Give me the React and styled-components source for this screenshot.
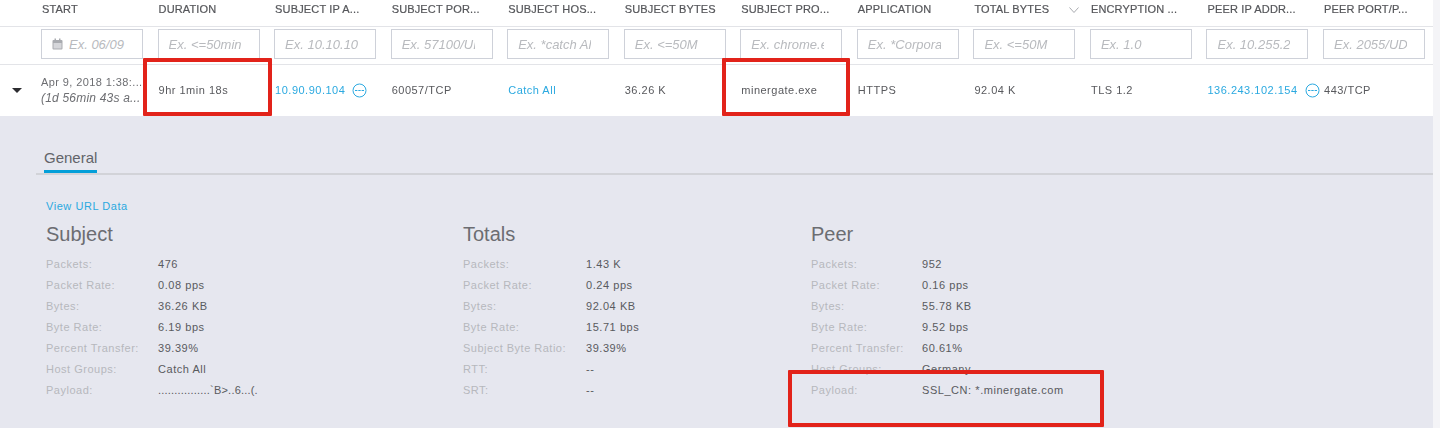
import React from 'react';
import styled, {createGlobalStyle} from "styled-components";

const GlobalStyle = createGlobalStyle`
    html, body {
        margin: 0;
        padding: 0;
        background: #ffffff;
    }
    body {
        font-family: "Liberation Sans", Arial, sans-serif;
        color: #4d4d4f;
    }
`;

const Page = styled.div`
    position: relative;
    width: 1440px;
    height: 428px;
    overflow: hidden;
    filter: blur(0.5px);
`;

const Table = styled.div`
    width: 1433px;
    height: 428px;
    display: flex;
    flex-direction: column;
`;

const Row = styled.div`
    display: grid;
    grid-template-columns: repeat(12, 116.55px);
    padding-left: 41px;
    box-sizing: border-box;
    align-items: center;
`;

const HeaderRow = styled(Row)`
    height: 27px;
    padding-bottom: 9px;
    border-bottom: 1px solid #e3e4e8;
`;

const HeaderCell = styled.div`
    position: relative;
    padding-left: 1px;
    font-size: 11px;
    letter-spacing: 0.15px;
    color: #55565a;
    -webkit-text-stroke: 0.2px #55565a;
    white-space: nowrap;
`;

const SortIcon = styled.svg`
    position: absolute;
    top: 4px;
    left: 96px;
    width: 10px;
    height: 6px;
`;

const FilterRow = styled(Row)`
    height: 38px;
    padding-bottom: 3px;
    border-bottom: 1px solid #e3e4e8;
`;

const FilterBox = styled.div`
    width: 102px;
    height: 30px;
    box-sizing: border-box;
    border: 1px solid #ced1d9;
    padding: 0 17px 0 10px;
    display: flex;
    align-items: center;
    gap: 6px;
    background: #ffffff;
`;

const FilterHint = styled.span`
    flex: 1;
    min-width: 0;
    overflow: hidden;
    font-size: 13px;
    font-style: italic;
    color: #b8babe;
    white-space: nowrap;
`;

const DataRow = styled(Row)`
    position: relative;
    height: 51px;
    padding-bottom: 1px;
`;

const Caret = styled.div`
    position: absolute;
    left: 12px;
    top: 23px;
    width: 0;
    height: 0;
    border-left: 5.5px solid transparent;
    border-right: 5.5px solid transparent;
    border-top: 5px solid #2c2c30;
`;

const DataCell = styled.div`
    display: flex;
    align-items: center;
    gap: 7px;
    padding-left: 1px;
    font-size: 11px;
    letter-spacing: 0.5px;
    color: ${props => props.$link ? "#2ba9e0" : "#58595d"};
    white-space: nowrap;
`;

const StartCell = styled.div`
    font-size: 11px;
    line-height: 16px;
    letter-spacing: 0.4px;
    color: #6d6e72;
    white-space: nowrap;
`;

const StartAgo = styled.div`
    font-style: italic;
    font-size: 12px;
    letter-spacing: 0.2px;
`;

const Panel = styled.div`
    flex: 1;
    background: #e6e7ef;
    padding-top: 33px;
`;

const TabBar = styled.div`
    margin-left: 36px;
    height: 24px;
    padding-left: 8px;
    border-bottom: 2px solid #d2d3d8;
`;

const Tab = styled.div`
    display: inline-block;
    height: 21px;
    border-bottom: 3px solid #049fd9;
    font-size: 15px;
    line-height: 18px;
    color: #626469;
`;

const ViewLink = styled.div`
    margin: 24px 0 0 46px;
    font-size: 11px;
    line-height: 14px;
    letter-spacing: 0.55px;
    color: #2ba9e0;
`;

const Sections = styled.div`
    display: flex;
    margin: 8px 0 0 46px;
`;

const Section = styled.section`
    width: ${props => props.$width}px;
`;

const SectionTitle = styled.h3`
    margin: 0 0 6px;
    font-size: 20px;
    font-weight: 400;
    line-height: 26px;
    color: #6c6d72;
`;

const Stat = styled.div`
    display: grid;
    grid-template-columns: ${props => props.$labelWidth}px 1fr;
    height: 21px;
    align-items: center;
    font-size: 11px;
    white-space: nowrap;
`;

const StatLabel = styled.span`
    letter-spacing: 0.5px;
    color: #b6b8bd;
`;

const StatValue = styled.span`
    letter-spacing: ${props => props.$tight ? "0.2px" : "0.55px"};
    color: #595a5e;
`;

const Highlight = styled.div`
    position: absolute;
    left: ${props => props.$left}px;
    top: ${props => props.$top}px;
    width: ${props => props.$width}px;
    height: ${props => props.$height}px;
    box-sizing: border-box;
    border: 4px solid #e2231a;
    border-radius: 1px;
`;

const ScrollStrip = styled.div`
    position: absolute;
    top: 0;
    right: 0;
    width: 7px;
    height: 428px;
    background: #f4f4f7;
`;

const headers = [
    "START", "DURATION", "SUBJECT IP A...", "SUBJECT POR...", "SUBJECT HOS...", "SUBJECT BYTES",
    "SUBJECT PRO...", "APPLICATION", "TOTAL BYTES", "ENCRYPTION ...", "PEER IP ADDR...", "PEER PORT/P...",
];

const filters = [
    "Ex. 06/09", "Ex. <=50min", "Ex. 10.10.10", "Ex. 57100/UDP", "Ex. *catch All", "Ex. <=50M",
    "Ex. chrome.exe", "Ex. *Corporate", "Ex. <=50M", "Ex. 1.0", "Ex. 10.255.2", "Ex. 2055/UDP",
];

const sections = [
    {
        title: "Subject", width: 417, labelWidth: 112,
        stats: [
            ["Packets:", "476"], ["Packet Rate:", "0.08 pps"], ["Bytes:", "36.26 KB"], ["Byte Rate:", "6.19 bps"],
            ["Percent Transfer:", "39.39%"], ["Host Groups:", "Catch All"], ["Payload:", "................`B>..6...(.", true],
        ],
    },
    {
        title: "Totals", width: 348, labelWidth: 123,
        stats: [
            ["Packets:", "1.43 K"], ["Packet Rate:", "0.24 pps"], ["Bytes:", "92.04 KB"], ["Byte Rate:", "15.71 bps"],
            ["Subject Byte Ratio:", "39.39%"], ["RTT:", "--"], ["SRT:", "--"],
        ],
    },
    {
        title: "Peer", width: 400, labelWidth: 111,
        stats: [
            ["Packets:", "952"], ["Packet Rate:", "0.16 pps"], ["Bytes:", "55.78 KB"], ["Byte Rate:", "9.52 bps"],
            ["Percent Transfer:", "60.61%"], ["Host Groups:", "Germany"], ["Payload:", "SSL_CN: *.minergate.com"],
        ],
    },
];

const CalendarIcon = () => (
    <svg width="11" height="12" viewBox="0 0 11 12" style={{flexShrink: 0}}>
        <rect x="0.5" y="2" width="10" height="9.5" rx="1" fill="#a9abb0"/>
        <rect x="1.5" y="5" width="8" height="5.5" fill="#d5d6da"/>
        <rect x="2.5" y="0.5" width="1.5" height="3" fill="#a9abb0"/>
        <rect x="7" y="0.5" width="1.5" height="3" fill="#a9abb0"/>
    </svg>
);

const MoreIcon = () => (
    <svg width="15" height="15" viewBox="0 0 15 15" style={{flexShrink: 0}}>
        <circle cx="7.5" cy="7.5" r="6.5" fill="none" stroke="#2ba9e0" strokeWidth="1"/>
        <path d="M3 7.5h9" stroke="#2ba9e0" strokeWidth="1" strokeDasharray="2.4 .9"/>
    </svg>
);

const App = () => {
    return (
        <Page>
            <GlobalStyle/>
            <Table>
                <HeaderRow>
                    {headers.map((title, index) => (
                        <HeaderCell key={title}>
                            {title}
                            {index === 8 && (
                                <SortIcon viewBox="0 0 10 6">
                                    <path d="M.5.5l4.5 5 4.500-5" fill="none" stroke="#a9abb0" strokeWidth="1"/>
                                </SortIcon>
                            )}
                        </HeaderCell>
                    ))}
                </HeaderRow>
                <FilterRow>
                    {filters.map((hint, index) => (
                        <FilterBox key={index}>
                            {index === 0 && <CalendarIcon/>}
                            <FilterHint>{hint}</FilterHint>
                        </FilterBox>
                    ))}
                </FilterRow>
                <DataRow>
                    <Caret/>
                    <StartCell>
                        Apr 9, 2018 1:38:...
                        <StartAgo>(1d 56min 43s a...</StartAgo>
                    </StartCell>
                    <DataCell>9hr 1min 18s</DataCell>
                    <DataCell $link>10.90.90.104 <MoreIcon/></DataCell>
                    <DataCell>60057/TCP</DataCell>
                    <DataCell $link>Catch All</DataCell>
                    <DataCell>36.26 K</DataCell>
                    <DataCell>minergate.exe</DataCell>
                    <DataCell>HTTPS</DataCell>
                    <DataCell>92.04 K</DataCell>
                    <DataCell>TLS 1.2</DataCell>
                    <DataCell $link>136.243.102.154 <MoreIcon/></DataCell>
                    <DataCell>443/TCP</DataCell>
                </DataRow>
                <Panel>
                    <TabBar>
                        <Tab>General</Tab>
                    </TabBar>
                    <ViewLink>View URL Data</ViewLink>
                    <Sections>
                        {sections.map(section => (
                            <Section key={section.title} $width={section.width}>
                                <SectionTitle>{section.title}</SectionTitle>
                                {section.stats.map(([label, value, tight]) => (
                                    <Stat key={label} $labelWidth={section.labelWidth}>
                                        <StatLabel>{label}</StatLabel>
                                        <StatValue $tight={tight}>{value}</StatValue>
                                    </Stat>
                                ))}
                            </Section>
                        ))}
                    </Sections>
                </Panel>
            </Table>
            <ScrollStrip/>
            <Highlight $left={143} $top={58} $width={129} $height={58}/>
            <Highlight $left={722} $top={58} $width={128} $height={58}/>
            <Highlight $left={788} $top={370} $width={316} $height={57}/>
        </Page>
    );
};

export default App;
